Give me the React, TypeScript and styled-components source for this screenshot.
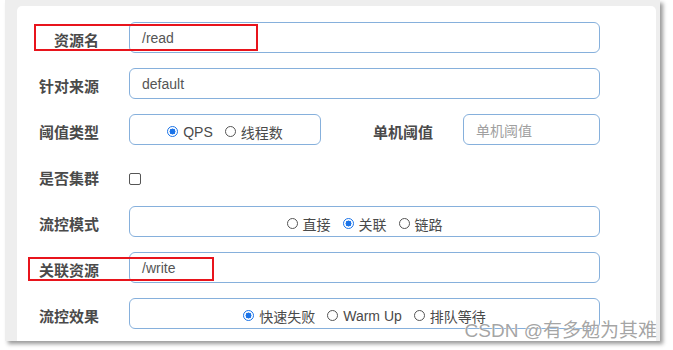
import React from 'react';
import styled, { createGlobalStyle } from 'styled-components';

const GlobalStyle = createGlobalStyle`
  html, body {
    margin: 0;
    padding: 0;
    background: #ffffff;
  }
  body {
    font-family: 'Liberation Sans', 'Noto Sans CJK SC', sans-serif;
  }
`;

const Page = styled.div`
  position: relative;
  width: 673px;
  height: 350px;
`;

const Shot = styled.div`
  width: 655px;
  height: 341px;
  margin-left: 5px;
  padding: 6px 4px 0 12px;
  box-sizing: border-box;
  background: #eeeeee;
  box-shadow: 3px 3px 4px rgba(0, 0, 0, 0.4);
  overflow: hidden;
`;

const Card = styled.div`
  width: 639px;
  height: 360px;
  background: #ffffff;
  border-radius: 5px;
  padding: 16px 56px 0 0;
  box-sizing: border-box;
  display: flex;
  flex-direction: column;
  gap: 15px;
`;

const Row = styled.div`
  position: relative;
  display: flex;
  align-items: center;
  height: 31px;
`;

const Label = styled.div<{ $width?: number }>`
  width: ${({ $width }) => $width ?? 112}px;
  flex: none;
  box-sizing: border-box;
  padding: 4px 30px 0 0;
  text-align: right;
  font-family: 'Noto Sans CJK SC', sans-serif;
  font-size: 15px;
  font-weight: 700;
  color: #4a4a4a;
`;

const Field = styled.div<{ $width?: number; $center?: boolean }>`
  ${({ $width }) => ($width ? `width: ${$width}px; flex: none;` : 'flex: 1;')}
  height: 31px;
  box-sizing: border-box;
  border: 1px solid #86b0dc;
  border-radius: 6px;
  display: flex;
  align-items: center;
  justify-content: ${({ $center }) => ($center ? 'center' : 'flex-start')};
  padding: 0 12px;
  font-size: 14px;
  color: #555555;
`;

const Placeholder = styled.span`
  color: #a0a0a0;
  font-family: 'Noto Sans CJK SC', sans-serif;
  font-size: 14px;
`;

const Options = styled.div`
  display: flex;
  align-items: center;
  gap: 12px;
  padding-top: 4px;
`;

const Option = styled.label`
  display: flex;
  align-items: center;
  gap: 5px;
  font-family: 'Liberation Sans', 'Noto Sans CJK SC', sans-serif;
  font-size: 14px;
  color: #4a4a4a;
`;

const Dot = styled.span<{ $checked?: boolean }>`
  width: 11px;
  height: 11px;
  border-radius: 50%;
  box-sizing: border-box;
  border: ${({ $checked }) => ($checked ? '1.5px solid #1a73e8' : '1px solid #555')};
  background: ${({ $checked }) =>
    $checked ? 'radial-gradient(circle, #1a73e8 0 2.8px, #fff 3.2px)' : '#fff'};
  flex: none;
`;

const Check = styled.span`
  width: 12px;
  height: 12px;
  margin-top: 6px;
  box-sizing: border-box;
  border: 1px solid #555;
  border-radius: 2px;
`;

const Mark = styled.div<{ $left: number; $top: number; $w: number; $h: number }>`
  position: absolute;
  left: ${({ $left }) => $left}px;
  top: ${({ $top }) => $top}px;
  width: ${({ $w }) => $w}px;
  height: ${({ $h }) => $h}px;
  border: 2px solid #e8141c;
  box-sizing: border-box;
  pointer-events: none;
`;

const Watermark = styled.div`
  position: absolute;
  right: 16px;
  top: 319px;
  font-family: 'Liberation Sans', 'Noto Sans CJK SC', sans-serif;
  font-size: 19px;
  line-height: 24px;
  color: rgba(125, 125, 125, 0.7);
  text-shadow: 0 0 1px #fff, 0 0 1px #fff;
  white-space: nowrap;
`;

type Opt = { text: string; checked?: boolean };

const Radios: React.FC<{ items: Opt[] }> = ({ items }) => (
  <Options>
    {items.map((o) => (
      <Option key={o.text}>
        <Dot $checked={o.checked} />
        {o.text}
      </Option>
    ))}
  </Options>
);

export default function App() {
  return (
    <Page>
      <GlobalStyle />
      <Shot>
        <Card>
          <Row>
            <Label>资源名</Label>
            <Field>/read</Field>
            <Mark $left={17} $top={2} $w={224} $h={27} />
          </Row>
          <Row>
            <Label>针对来源</Label>
            <Field>default</Field>
          </Row>
          <Row>
            <Label>阈值类型</Label>
            <Field $width={192} $center>
              <Radios items={[{ text: 'QPS', checked: true }, { text: '线程数' }]} />
            </Field>
            <Label $width={142}>单机阈值</Label>
            <Field>
              <Placeholder>单机阈值</Placeholder>
            </Field>
          </Row>
          <Row>
            <Label>是否集群</Label>
            <Check />
          </Row>
          <Row>
            <Label>流控模式</Label>
            <Field $center>
              <Radios items={[{ text: '直接' }, { text: '关联', checked: true }, { text: '链路' }]} />
            </Field>
          </Row>
          <Row>
            <Label>关联资源</Label>
            <Field>/write</Field>
            <Mark $left={11} $top={5} $w={186} $h={24} />
          </Row>
          <Row>
            <Label>流控效果</Label>
            <Field $center>
              <Radios
                items={[{ text: '快速失败', checked: true }, { text: 'Warm Up' }, { text: '排队等待' }]}
              />
            </Field>
          </Row>
        </Card>
      </Shot>
      <Watermark>CSDN @有多勉为其难</Watermark>
    </Page>
  );
}
